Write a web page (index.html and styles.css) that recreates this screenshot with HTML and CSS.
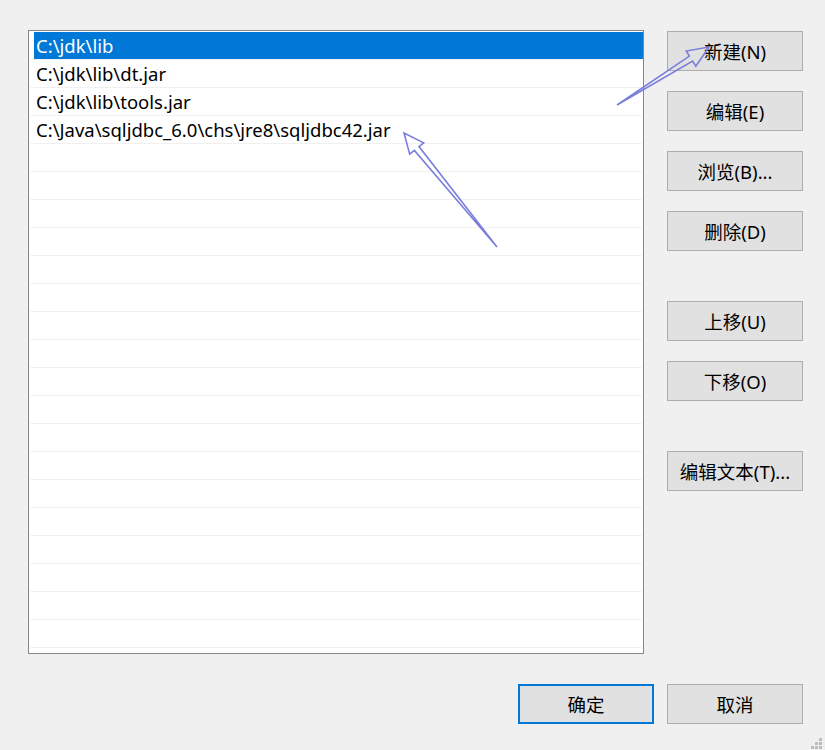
FILE: index.html
```html
<!DOCTYPE html>
<html lang="zh-CN">
<head>
<meta charset="utf-8">
<title>编辑环境变量</title>
<link rel="stylesheet" href="styles.css">
</head>
<body>
<div class="dialog">
  <div class="main">
    <div class="listbox">
      <div class="row"><div class="cell selected">C:\jdk\lib</div></div>
      <div class="row"><div class="cell">C:\jdk\lib\dt.jar</div></div>
      <div class="row"><div class="cell">C:\jdk\lib\tools.jar</div></div>
      <div class="row"><div class="cell">C:\Java\sqljdbc_6.0\chs\jre8\sqljdbc42.jar</div></div>
      <div class="row"><div class="cell"></div></div>
      <div class="row"><div class="cell"></div></div>
      <div class="row"><div class="cell"></div></div>
      <div class="row"><div class="cell"></div></div>
      <div class="row"><div class="cell"></div></div>
      <div class="row"><div class="cell"></div></div>
      <div class="row"><div class="cell"></div></div>
      <div class="row"><div class="cell"></div></div>
      <div class="row"><div class="cell"></div></div>
      <div class="row"><div class="cell"></div></div>
      <div class="row"><div class="cell"></div></div>
      <div class="row"><div class="cell"></div></div>
      <div class="row"><div class="cell"></div></div>
      <div class="row"><div class="cell"></div></div>
      <div class="row"><div class="cell"></div></div>
      <div class="row"><div class="cell"></div></div>
      <div class="row"><div class="cell"></div></div>
      <div class="row"><div class="cell"></div></div>
    </div>
    <div class="side">
      <div class="group">
        <button class="btn">新建(N)</button>
        <button class="btn">编辑(E)</button>
        <button class="btn">浏览(B)...</button>
        <button class="btn">删除(D)</button>
      </div>
      <div class="group">
        <button class="btn">上移(U)</button>
        <button class="btn">下移(O)</button>
      </div>
      <div class="group">
        <button class="btn">编辑文本(T)...</button>
      </div>
    </div>
  </div>
  <div class="footer">
    <button class="btn primary">确定</button>
    <button class="btn">取消</button>
  </div>
</div>
<div class="grip">
  <span></span><span></span><span></span><span></span><span></span><span></span><span></span><span></span><span></span>
</div>
<svg class="annot" width="825" height="750" viewBox="0 0 825 750">
  <polygon points="617,105 689.4,56.1 686.2,51 709,47 695.8,66.2 692.6,61.1" fill="none" stroke="#7b7fdc" stroke-width="1.6" stroke-linejoin="miter"/>
  <polygon points="497,247 414.4,150.4 409.7,154.2 404,133 423.7,142.8 419,146.6" fill="none" stroke="#7b7fdc" stroke-width="1.6" stroke-linejoin="miter"/>
</svg>
</body>
</html>
```
FILE: styles.css
```css
html, body {
  margin: 0;
  padding: 0;
  background: #f0f0f0;
}
body {
  width: 825px;
  height: 750px;
  position: relative;
  overflow: hidden;
  font-family: "Noto Sans", "Noto Sans CJK SC", sans-serif;
  font-size: 18.5px;
  color: #000;
}
.dialog {
  padding: 30px 0 0 28px;
}
.main {
  display: flex;
  gap: 23px;
}
.listbox {
  border: 1px solid #828790;
  background: #fff;
  padding: 1px 0 0 1px;
  box-sizing: border-box;
  width: 616px;
  height: 624px;
  overflow: hidden;
}
.row {
  height: 27px;
  border-bottom: 1px solid #f0f0f0;
  margin-right: 1px;
}
.cell {
  height: 27px;
  line-height: 27px;
  margin-left: 4px;
  padding-left: 2px;
  white-space: nowrap;
}
.cell.selected {
  background: #0078d7;
  color: #fff;
  margin-right: -1px;
}
.side {
  display: flex;
  flex-direction: column;
  gap: 50px;
  padding-top: 1px;
}
.group {
  display: flex;
  flex-direction: column;
  gap: 20px;
}
.btn {
  width: 136px;
  height: 40px;
  box-sizing: border-box;
  background: #e1e1e1;
  border: 1px solid #adadad;
  font-family: "Noto Sans", "Noto Sans CJK SC", sans-serif;
  font-size: 18.5px;
  color: #000;
  padding: 0;
  margin: 0;
  border-radius: 0;
}
.btn.primary {
  border: 2px solid #0078d7;
}
.footer {
  display: flex;
  justify-content: flex-end;
  gap: 13px;
  margin-top: 30px;
  padding-right: 22px;
}
.grip {
  position: absolute;
  right: 3px;
  bottom: 1px;
  display: grid;
  grid-template-columns: repeat(3, 3px);
  grid-template-rows: repeat(3, 3px);
  gap: 1px;
}
.grip span {
  background: #bcbcbc;
}
.grip span:nth-child(1), .grip span:nth-child(2), .grip span:nth-child(4) {
  background: transparent;
}
.annot {
  position: absolute;
  left: 0;
  top: 0;
  pointer-events: none;
}
```
